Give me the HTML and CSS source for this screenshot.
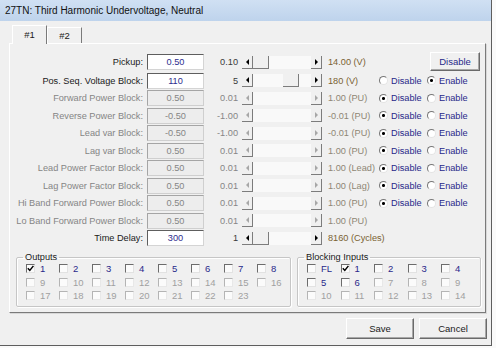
FILE: index.html
```html
<!DOCTYPE html>
<html lang="en">
<head>
    <meta charset="UTF-8">
    <title>27TN</title>
    <link rel="stylesheet" href="styles.css">
</head>
<body>
    <div class="window">
        <div class="titlebar">27TN: Third Harmonic Undervoltage, Neutral</div>
        <div class="tabs">
            <div class="tab active">#1</div>
            <div class="tab">#2</div>
        </div>
        <div class="panel">
            <div class="settings">
                <div class="row first">
                    <span class="label">Pickup:</span>
                    <span class="field">0.50</span>
                    <span class="step">0.10</span>
                    <span class="scroll"><i class="arr l"></i><i class="track"><b class="thumb"></b></i><i class="arr r"></i></span>
                    <span class="value">14.00 (V)</span>
                    <button class="btn btn-disable">Disable</button>
                </div>
                <div class="row">
                    <span class="label">Pos. Seq. Voltage Block:</span>
                    <span class="field">110</span>
                    <span class="step">5</span>
                    <span class="scroll"><i class="arr l"></i><i class="track"><b class="thumb" style="margin-left:30px"></b></i><i class="arr r"></i></span>
                    <span class="value">180 (V)</span>
                    <span class="radio">Disable</span>
                    <span class="radio on">Enable</span>
                </div>
                <div class="row off">
                    <span class="label">Forward Power Block:</span>
                    <span class="field">0.50</span>
                    <span class="step">0.01</span>
                    <span class="scroll"><i class="arr l"></i><i class="track"></i><i class="arr r"></i></span>
                    <span class="value">1.00 (PU)</span>
                    <span class="radio on">Disable</span>
                    <span class="radio">Enable</span>
                </div>
                <div class="row off">
                    <span class="label">Reverse Power Block:</span>
                    <span class="field">-0.50</span>
                    <span class="step">-1.00</span>
                    <span class="scroll"><i class="arr l"></i><i class="track"></i><i class="arr r"></i></span>
                    <span class="value">-0.01 (PU)</span>
                    <span class="radio on">Disable</span>
                    <span class="radio">Enable</span>
                </div>
                <div class="row off">
                    <span class="label">Lead var Block:</span>
                    <span class="field">-0.50</span>
                    <span class="step">-1.00</span>
                    <span class="scroll"><i class="arr l"></i><i class="track"></i><i class="arr r"></i></span>
                    <span class="value">-0.01 (PU)</span>
                    <span class="radio on">Disable</span>
                    <span class="radio">Enable</span>
                </div>
                <div class="row off">
                    <span class="label">Lag var Block:</span>
                    <span class="field">0.50</span>
                    <span class="step">0.01</span>
                    <span class="scroll"><i class="arr l"></i><i class="track"></i><i class="arr r"></i></span>
                    <span class="value">1.00 (PU)</span>
                    <span class="radio on">Disable</span>
                    <span class="radio">Enable</span>
                </div>
                <div class="row off">
                    <span class="label">Lead Power Factor Block:</span>
                    <span class="field">0.50</span>
                    <span class="step">0.01</span>
                    <span class="scroll"><i class="arr l"></i><i class="track"></i><i class="arr r"></i></span>
                    <span class="value">1.00 (Lead)</span>
                    <span class="radio on">Disable</span>
                    <span class="radio">Enable</span>
                </div>
                <div class="row off">
                    <span class="label">Lag Power Factor Block:</span>
                    <span class="field">0.50</span>
                    <span class="step">0.01</span>
                    <span class="scroll"><i class="arr l"></i><i class="track"></i><i class="arr r"></i></span>
                    <span class="value">1.00 (Lag)</span>
                    <span class="radio on">Disable</span>
                    <span class="radio">Enable</span>
                </div>
                <div class="row off">
                    <span class="label">Hi Band Forward Power Block:</span>
                    <span class="field">0.50</span>
                    <span class="step">0.01</span>
                    <span class="scroll"><i class="arr l"></i><i class="track"></i><i class="arr r"></i></span>
                    <span class="value">1.00 (PU)</span>
                    <span class="radio on">Disable</span>
                    <span class="radio">Enable</span>
                </div>
                <div class="row off">
                    <span class="label">Lo Band Forward Power Block:</span>
                    <span class="field">0.50</span>
                    <span class="step">0.01</span>
                    <span class="scroll"><i class="arr l"></i><i class="track"></i><i class="arr r"></i></span>
                    <span class="value">1.00 (PU)</span>
                </div>
                <div class="row">
                    <span class="label">Time Delay:</span>
                    <span class="field">300</span>
                    <span class="step">1</span>
                    <span class="scroll"><i class="arr l"></i><i class="track"><b class="thumb"></b></i><i class="arr r"></i></span>
                    <span class="value">8160 (Cycles)</span>
                </div>
            </div>

            <div class="groups">
                <fieldset class="group outputs">
                    <legend>Outputs</legend>
                    <div class="checks">
                        <span class="cb"><i class="box"><svg viewBox="0 0 7 7"><path d="M0.8 3.2 L2.8 5.4 L6.4 0.9"/></svg></i>1</span>
                        <span class="cb"><i class="box"></i>2</span>
                        <span class="cb"><i class="box"></i>3</span>
                        <span class="cb"><i class="box"></i>4</span>
                        <span class="cb"><i class="box"></i>5</span>
                        <span class="cb"><i class="box"></i>6</span>
                        <span class="cb"><i class="box"></i>7</span>
                        <span class="cb"><i class="box"></i>8</span>
                        <span class="cb off"><i class="box"></i>9</span>
                        <span class="cb off"><i class="box"></i>10</span>
                        <span class="cb off"><i class="box"></i>11</span>
                        <span class="cb off"><i class="box"></i>12</span>
                        <span class="cb off"><i class="box"></i>13</span>
                        <span class="cb off"><i class="box"></i>14</span>
                        <span class="cb off"><i class="box"></i>15</span>
                        <span class="cb off"><i class="box"></i>16</span>
                        <span class="cb off"><i class="box"></i>17</span>
                        <span class="cb off"><i class="box"></i>18</span>
                        <span class="cb off"><i class="box"></i>19</span>
                        <span class="cb off"><i class="box"></i>20</span>
                        <span class="cb off"><i class="box"></i>21</span>
                        <span class="cb off"><i class="box"></i>22</span>
                        <span class="cb off"><i class="box"></i>23</span>
                    </div>
                </fieldset>
                <fieldset class="group blocking">
                    <legend>Blocking Inputs</legend>
                    <div class="checks">
                        <span class="cb"><i class="box"></i>FL</span>
                        <span class="cb"><i class="box"><svg viewBox="0 0 7 7"><path d="M0.8 3.2 L2.8 5.4 L6.4 0.9"/></svg></i>1</span>
                        <span class="cb"><i class="box"></i>2</span>
                        <span class="cb"><i class="box"></i>3</span>
                        <span class="cb"><i class="box"></i>4</span>
                        <span class="cb"><i class="box"></i>5</span>
                        <span class="cb"><i class="box"></i>6</span>
                        <span class="cb off"><i class="box"></i>7</span>
                        <span class="cb off"><i class="box"></i>8</span>
                        <span class="cb off"><i class="box"></i>9</span>
                        <span class="cb off"><i class="box"></i>10</span>
                        <span class="cb off"><i class="box"></i>11</span>
                        <span class="cb off"><i class="box"></i>12</span>
                        <span class="cb off"><i class="box"></i>13</span>
                        <span class="cb off"><i class="box"></i>14</span>
                    </div>
                </fieldset>
            </div>
        </div>
        <div class="buttons">
            <button class="btn">Save</button>
            <button class="btn">Cancel</button>
        </div>
    </div>
</body>
</html>
```

FILE: styles.css
```css
body {
    margin: 0;
    background: #fafafa;
    font-family: "Liberation Sans", Arial, sans-serif;
    font-size: 9.2px;
    color: #1a1a1a;
}
.window {
    width: 491px;
    height: 345px;
    background: #f0f0f0;
    border-right: 1px solid #5e5e5e;
    border-bottom: 1px solid #5e5e5e;
    display: flex;
    flex-direction: column;
}
.titlebar {
    height: 21px;
    line-height: 21px;
    padding-left: 5px;
    font-size: 10px;
    color: #111;
    background: linear-gradient(#d0e0f3, #bed3ec);
}

/* tabs */
.tabs {
    display: flex;
    align-items: flex-end;
    height: 22px;
    padding-left: 12px;
}
.tab {
    width: 33px;
    height: 15px;
    line-height: 15px;
    text-align: center;
    font-size: 9.5px;
    border-top: 1px solid #fff;
    border-left: 1px solid #fff;
    border-right: 1px solid #7a7a7a;
}
.tab.active {
    height: 18px;
    line-height: 17px;
    position: relative;
    top: 1px;
    background: #f0f0f0;
}

.panel {
    margin-left: 9px;
    width: 475px;
    height: 268px;
    border: 1px solid;
    border-color: #fff #7a7a7a #7a7a7a #fff;
    box-shadow: 1px 1px 0 #d8d8d8;
    display: flex;
    flex-direction: column;
}
.settings {
    padding-top: 8px;
}
.row {
    display: grid;
    grid-template-columns: 137px 57px 38px 84px 52px 48px 54px;
    align-items: center;
    height: 17.5px;
}
.row.first {
    height: 20px;
}
.label {
    text-align: right;
    padding-right: 4px;
    white-space: nowrap;
}
.field {
    box-sizing: border-box;
    height: 16px;
    line-height: 14px;
    text-align: center;
    color: #2d2d8e;
    background: #fff;
    border: 1px solid;
    border-color: #5e5e5e #d4d4d4 #d4d4d4 #5e5e5e;
}
.step {
    text-align: right;
    padding-right: 4px;
    color: #3a3a3a;
}
.value {
    padding-left: 2px;
    white-space: nowrap;
    color: #7a6232;
}
.off .label, .off .field, .off .step {
    color: #858585;
}
.off .field {
    background: #ededed;
    border-color: #a5a5a5 #cfcfcf #cfcfcf #a5a5a5;
}
.off .value {
    color: #8e8674;
}

/* slider */
.scroll {
    display: flex;
    width: 80px;
    height: 13px;
}
.arr {
    width: 10px;
    display: flex;
    align-items: center;
    justify-content: center;
    background: #f0f0f0;
    border-right: 1px solid #7c7c7c;
    border-bottom: 1px solid #7c7c7c;
}
.arr::before {
    content: "";
    border-style: solid;
    border-color: transparent;
}
.arr.l::before {
    border-width: 3px 3px 3px 0;
    border-right-color: #000;
}
.arr.r::before {
    border-width: 3px 0 3px 3px;
    border-left-color: #000;
}
.off .arr::before {
    opacity: .3;
}
.track {
    flex: 1;
    display: flex;
    background: #f9f9f9;
}
.thumb {
    width: 15px;
    background: #f0f0f0;
    border-right: 1px solid #7c7c7c;
    border-bottom: 1px solid #7c7c7c;
}

/* radios */
.radio {
    display: flex;
    align-items: center;
    gap: 3px;
    padding-left: 1px;
    color: #28288a;
    white-space: nowrap;
}
.radio::before {
    content: "";
    box-sizing: border-box;
    width: 9px;
    height: 9px;
    border-radius: 50%;
    border: 1px solid;
    border-color: #777 #e4e4e4 #e4e4e4 #777;
    background: #fff;
}
.radio.on::before {
    background: radial-gradient(circle, #000 1.2px, #fff 1.8px);
}

/* buttons */
.btn {
    font-family: inherit;
    font-size: 9.5px;
    color: #1a1a1a;
    background: #f0f0f0;
    border: 1px solid;
    border-color: #fff #6a6a6a #6a6a6a #fff;
    box-shadow: inset -1px -1px 0 #a8a8a8;
    padding: 0;
}
.btn-disable {
    grid-column: 6 / 8;
    justify-self: end;
    align-self: start;
    width: 50px;
    height: 19px;
    color: #28288a;
}

/* group boxes */
.groups {
    display: flex;
    gap: 6px;
    margin: 5px 0 0 6px;
}
.group {
    margin: 0;
    padding: 0 0 3px 9px;
    border: 1px solid #c6c6c6;
    border-radius: 2px;
    box-shadow: inset 1px 1px 0 #fff, 1px 1px 0 #fff;
}
.group legend {
    padding: 0 2px;
    margin-left: -3px;
}
.outputs {
    width: 264px;
}
.blocking {
    width: 173px;
}
.checks {
    display: grid;
    grid-template-columns: repeat(8, 33px);
    grid-auto-rows: 13.5px;
    align-items: center;
}
.blocking .checks {
    grid-template-columns: repeat(5, 33.5px);
}
.cb {
    display: flex;
    align-items: center;
    gap: 5px;
    font-size: 9.5px;
    color: #28288a;
}
.cb.off {
    color: #a0a0a0;
}
.box {
    box-sizing: border-box;
    width: 9px;
    height: 9px;
    border: 1px solid;
    border-color: #6c6c6c #e2e2e2 #e2e2e2 #6c6c6c;
    background: #fbfbfb;
    display: flex;
}
.off .box {
    border-color: #b4b4b4 #e8e8e8 #e8e8e8 #b4b4b4;
}
.box svg {
    width: 7px;
    height: 7px;
    fill: none;
    stroke: #000;
    stroke-width: 1.5;
}

.buttons {
    display: flex;
    justify-content: flex-end;
    gap: 5px;
    padding: 5px 4px 0 0;
}
.buttons .btn {
    width: 68px;
    height: 21px;
}
```
